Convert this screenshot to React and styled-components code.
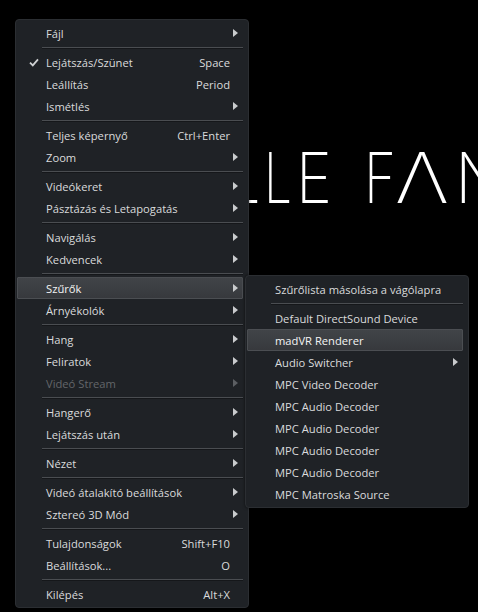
import React from "react";
import styled, { createGlobalStyle } from "styled-components";

const GlobalStyle = createGlobalStyle`
  html, body {
    margin: 0;
    padding: 0;
    background: #000;
  }
  body {
    font-family: "Open Sans", "Noto Sans", sans-serif;
  }
`;

const mainMenu = [
  [{ label: "Fájl", sub: true }],
  [
    { label: "Lejátszás/Szünet", shortcut: "Space", checked: true },
    { label: "Leállítás", shortcut: "Period" },
    { label: "Ismétlés", sub: true },
  ],
  [
    { label: "Teljes képernyő", shortcut: "Ctrl+Enter" },
    { label: "Zoom", sub: true },
  ],
  [
    { label: "Videókeret", sub: true },
    { label: "Pásztázás és Letapogatás", sub: true },
  ],
  [
    { label: "Navigálás", sub: true },
    { label: "Kedvencek", sub: true },
  ],
  [
    { label: "Szűrők", sub: true, active: true },
    { label: "Árnyékolók", sub: true },
  ],
  [
    { label: "Hang", sub: true },
    { label: "Feliratok", sub: true },
    { label: "Videó Stream", sub: true, disabled: true },
  ],
  [
    { label: "Hangerő", sub: true },
    { label: "Lejátszás után", sub: true },
  ],
  [{ label: "Nézet", sub: true }],
  [
    { label: "Videó átalakító beállítások", sub: true },
    { label: "Sztereó 3D Mód", sub: true },
  ],
  [
    { label: "Tulajdonságok", shortcut: "Shift+F10" },
    { label: "Beállítások...", shortcut: "O" },
  ],
  [{ label: "Kilépés", shortcut: "Alt+X" }],
];

const filterMenu = [
  [{ label: "Szűrőlista másolása a vágólapra" }],
  [
    { label: "Default DirectSound Device" },
    { label: "madVR Renderer", active: true },
    { label: "Audio Switcher", sub: true },
    { label: "MPC Video Decoder" },
    { label: "MPC Audio Decoder" },
    { label: "MPC Audio Decoder" },
    { label: "MPC Audio Decoder" },
    { label: "MPC Audio Decoder" },
    { label: "MPC Matroska Source" },
  ],
];

// letters of the title in the paused video frame: [char, x, width]
const titleLetters = [
  ["E", 188, 34],
  ["L", 232, 28],
  ["L", 264, 28],
  ["E", 296, 36],
  ["F", 364, 32],
  ["Λ", 395, 54],
  ["N", 455, 50],
];

const Check = () => (
  <svg width="10" height="9" viewBox="0 0 10 9">
    <path d="M1 4.6 L3.8 7.4 L9 1.4" fill="none" stroke="#cfd1d3" strokeWidth="1.8" />
  </svg>
);

const Arrow = ({ disabled }) => (
  <svg width="5" height="8" viewBox="0 0 5 8">
    <path d="M0 0 L5 4 L0 8 Z" fill={disabled ? "#5c5f63" : "#c9cbcd"} />
  </svg>
);

const Menu = ({ groups, left, top, width, textIndent, arrowCol }) => (
  <MenuBox style={{ left, top, width }}>
    {groups.map((group, gi) => (
      <React.Fragment key={gi}>
        {gi > 0 && <Separator $indent={textIndent - 4} />}
        {group.map((item, ii) => (
          <Item
            key={ii}
            $active={item.active}
            $disabled={item.disabled}
            $indent={textIndent}
            $arrowCol={arrowCol}
          >
            <CheckCell>{item.checked && <Check />}</CheckCell>
            <Label>{item.label}</Label>
            <Shortcut>{item.shortcut}</Shortcut>
            <ArrowCell>{item.sub && <Arrow disabled={item.disabled} />}</ArrowCell>
          </Item>
        ))}
      </React.Fragment>
    ))}
  </MenuBox>
);

const App = () => (
  <>
    <GlobalStyle />
    <Screen>
      <VideoTitle width="478" height="612" viewBox="0 0 478 612">
        {titleLetters.map(([ch, x, w], i) => (
          <text
            key={i}
            x={x}
            y="203"
            textLength={w}
            lengthAdjust="spacingAndGlyphs"
          >
            {ch}
          </text>
        ))}
      </VideoTitle>
      <Menu groups={mainMenu} left={15} top={19} width={234} textIndent={29} arrowCol={12} />
      <Menu groups={filterMenu} left={245} top={275} width={224} textIndent={28} arrowCol={12} />
    </Screen>
  </>
);

export default App;

const Screen = styled.div`
  position: relative;
  width: 478px;
  height: 612px;
  background: #000;
  overflow: hidden;
`;

const VideoTitle = styled.svg`
  position: absolute;
  left: 0;
  top: 0;
  fill: #fff;
  font-family: "Inter", "DejaVu Sans", sans-serif;
  font-weight: 200;
  font-size: 70px;
`;

const MenuBox = styled.div`
  position: absolute;
  box-sizing: border-box;
  padding: 2px 0 2px 1px;
  background: #1f2226;
  border: 1px solid #2b2e32;
  border-radius: 4px;
  box-shadow: 0 0 3px rgba(0, 0, 0, 0.6);
`;

const Separator = styled.div`
  height: 7px;
  display: flex;
  align-items: center;
  padding-left: ${(p) => p.$indent}px;
  padding-right: 5px;
  &::after {
    content: "";
    flex: 1;
    height: 1px;
    background: #4a4d51;
    box-shadow: 0 1px 0 #15171a;
  }
`;

const Item = styled.div`
  box-sizing: border-box;
  height: 22px;
  margin-right: 5px;
  display: grid;
  grid-template-columns: ${(p) => p.$indent - 1}px 1fr auto ${(p) => p.$arrowCol}px;
  align-items: center;
  font-size: 11.2px;
  color: ${(p) => (p.$disabled ? "#63666a" : p.$active ? "#f4f4f4" : "#dadbdc")};
  background: ${(p) => (p.$active ? "linear-gradient(#414448, #37393d)" : "transparent")};
  border: 1px solid ${(p) => (p.$active ? "#4b4e52" : "transparent")};
  border-radius: 1px;
`;

const CheckCell = styled.div`
  display: flex;
  justify-content: center;
  padding-left: 4px;
`;

const Label = styled.span`
  white-space: nowrap;
`;

const Shortcut = styled.span`
  white-space: nowrap;
`;

const ArrowCell = styled.div`
  display: flex;
  justify-content: flex-end;
  padding-right: 4px;
`;
